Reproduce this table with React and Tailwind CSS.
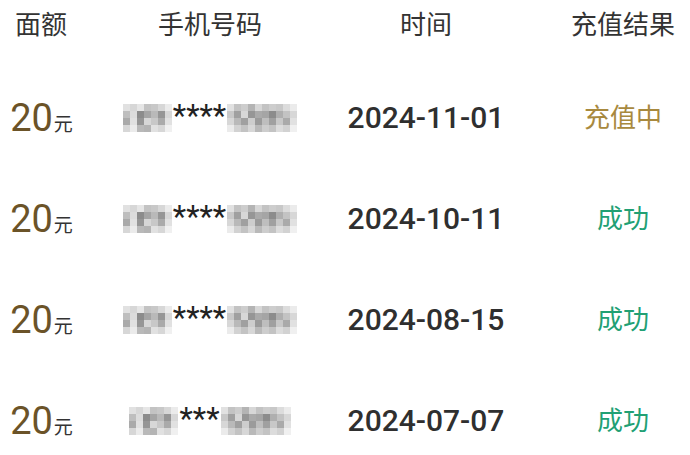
import React from "react"

const rows = [
  { date: "2024-11-01", status: "充值中", pending: true, stars: "****" },
  { date: "2024-10-11", status: "成功", stars: "****" },
  { date: "2024-08-15", status: "成功", stars: "****" },
  { date: "2024-07-07", status: "成功", stars: "***" },
]

// grayscale mosaic standing in for the blurred digits
const leftShades = [
  [225, 215, 230, 195, 200, 215, 235],
  [190, 220, 140, 165, 185, 150, 215],
  [170, 225, 150, 215, 200, 170, 225],
  [215, 235, 185, 180, 225, 215, 240],
]
const rightShades = [
  [225, 195, 205, 180, 215, 195, 205, 200, 220, 235],
  [200, 160, 215, 150, 170, 165, 140, 175, 195, 215],
  [215, 185, 160, 205, 155, 190, 160, 200, 170, 225],
  [235, 210, 195, 215, 185, 205, 195, 220, 210, 240],
]

function Mosaic({ shades, cell = 7 }) {
  const w = shades[0].length * cell
  const h = shades.length * cell
  return (
    <svg width={w} height={h} viewBox={`0 0 ${w} ${h}`} className="block">
      {shades.map((r, y) =>
        r.map((g, x) => (
          <rect key={`${x}-${y}`} x={x * cell} y={y * cell} width={cell} height={cell} fill={`rgb(${g},${g},${g})`} />
        ))
      )}
    </svg>
  )
}

export default function App() {
  return (
    <div
      className="w-[690px] h-[455px] bg-white overflow-hidden text-[#333333]"
      style={{ fontFamily: 'Roboto, "Noto Sans CJK SC", sans-serif' }}
    >
      {/* header */}
      <div className="grid grid-cols-[82px_256px_176px_1fr] h-[50px] items-center text-[26px] leading-none">
        <div className="text-center">面额</div>
        <div className="text-center">手机号码</div>
        <div className="text-center">时间</div>
        <div className="text-center pl-[42px]">充值结果</div>
      </div>

      <div className="mt-[17px]">
        {rows.map((r) => (
          <div key={r.date} className="grid grid-cols-[82px_256px_176px_1fr] h-[101px] items-center">
            <div className="flex items-baseline justify-center pl-[1px]">
              <span className="text-[38px] leading-none text-[#6b5328]">20</span>
              <span className="text-[19px] leading-none ml-[1px]">元</span>
            </div>
            <div className="flex items-center justify-center">
              <Mosaic shades={leftShades} />
              <span className="text-[31px] leading-none mt-[-5px] mx-[1px] text-[#222]">{r.stars}</span>
              <Mosaic shades={rightShades} />
            </div>
            <div className="text-center text-[30px] font-medium leading-none text-[#2f2f2f]">{r.date}</div>
            <div
              className={
                "text-center pl-[42px] text-[26px] leading-none " +
                (r.pending ? "text-[#a8893e]" : "text-[#21a074]")
              }
            >
              {r.status}
            </div>
          </div>
        ))}
      </div>
    </div>
  )
}
